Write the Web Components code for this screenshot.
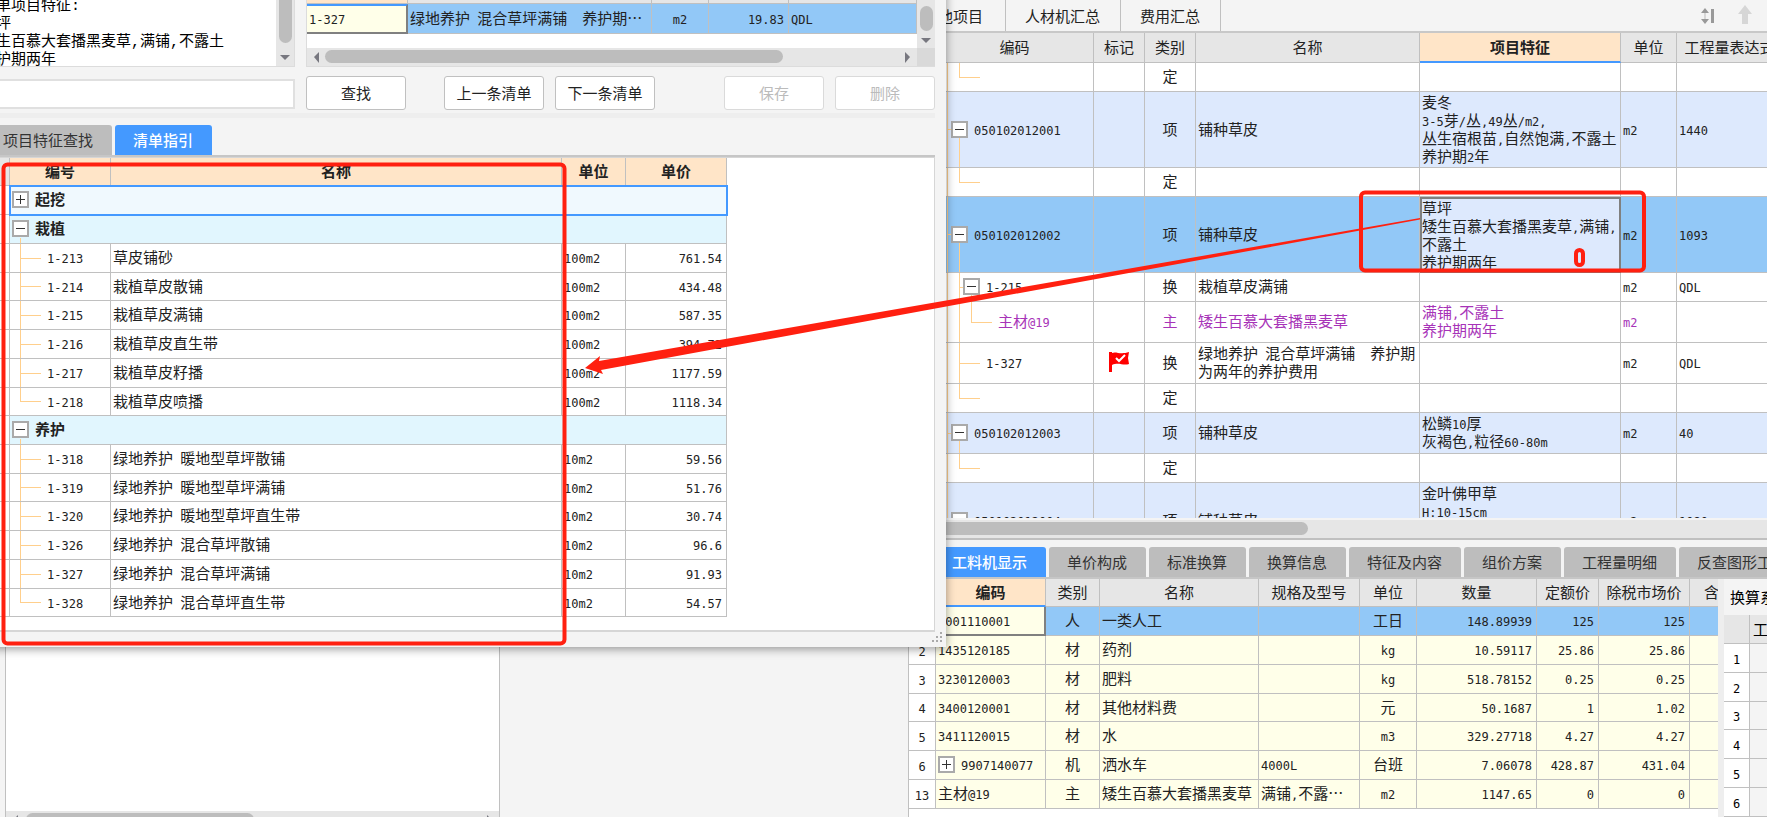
<!DOCTYPE html>
<html lang="zh-CN">
<head>
<meta charset="utf-8">
<title>清单指引</title>
<style>
html, body { height: 100%; margin: 0; overflow: hidden; }
body {
  font: 15px/18px "Noto Sans CJK SC", sans-serif; color: #222; background: #f4f4f4;
  --line: #c0c0c0; --blue: #4499ff; --head: #e6e6e6; --peach: #ffe5c8; --sel: #92c8f7;
  --item: #dde9fd; --cream: #ffffe9; --tree: #ffcf8c; --purple: #a733b8; --mark: #ff2010;
}
</style>
</head>
<body>
<cost-app></cost-app>

<template id="app-tpl">
<style>
:host { display: flex; height: 100vh; position: relative; overflow: hidden; }
.side { flex: 0 0 495px; box-sizing: border-box; display: flex; flex-direction: column; margin-left: 5px;
  border: 1px solid var(--line); border-width: 0 1px; background: #fff; }
.side scroll-bar { margin-top: auto; height: 6px; overflow: hidden; align-items: flex-start; }
.gutter { flex: 0 0 409px; box-sizing: border-box; border-right: 1px solid var(--line); }
main { flex: 1; min-width: 0; display: flex; flex-direction: column; }
.upper { flex: 1; min-height: 0; display: flex; flex-direction: column; border-bottom: 2px solid var(--line); box-sizing: border-box; }
.bar { display: flex; justify-content: space-between; height: 31px; flex: none; border-bottom: 2px solid #c8c8c8; }
.bar nav { display: flex; }
.bar a { color: inherit; text-decoration: none; padding: 7px 20px 4px 19px; height: 20px; border-right: 1px solid var(--line); }
.bar a:first-child { padding: 7px 22px 4px 14px; }
.tools { display: flex; align-items: flex-start; padding-top: 3px; gap: 20px; width: 66px; flex: none; overflow: hidden; }
.tools button { all: unset; flex: none; display: block; height: 24px; }
.clip { flex: 1; min-height: 0; overflow: hidden; background: #fff; }
.upper scroll-bar { margin-top: 2px; }
.lower { flex: 0 0 277px; display: flex; flex-direction: column; }
tab-strip { padding: 7px 0 0 25px; }
.split { flex: 1; min-height: 0; display: flex; background: #fff; }
.split .clip { min-width: 0; }
aside { flex: 0 0 43px; border-left: 6px solid #eee; background: #f4f4f4; overflow: hidden; color: #000; white-space: nowrap; }
aside h2 { font: inherit; margin: 0; padding: 9px 0 9px 6px; }
</style>
<div class="side"><scroll-bar thumb="228" lead="2"></scroll-bar></div>
<div class="gutter"></div>
<main>
  <section class="upper">
    <div class="bar">
      <nav><a href="#">其他项目</a><a href="#">人材机汇总</a><a href="#">费用汇总</a></nav>
      <div class="tools">
        <button aria-label="行高"><svg width="17" height="24"><path d="M0 10l4-5 4 5zM0 16l4 5 4-5z" fill="#999"/><path d="M4 10v6" stroke="#bbb"/><path d="M10 6h3v14h-3z" fill="#999"/></svg></button>
        <button aria-label="上移"><svg width="14" height="24"><path d="M0 11L7 2l7 9h-4v10H4V11z" fill="#d6d6d6"/></svg></button>
        <button aria-label="下移"><svg width="14" height="24"><path d="M0 12l7 9 7-9h-4V2H4v10z" fill="#d6d6d6"/></svg></button>
      </div>
    </div>
    <div class="clip"><data-grid id="bill"></data-grid></div>
    <scroll-bar thumb="399" lead="0" bare></scroll-bar>
  </section>
  <section class="lower">
    <tab-strip active="0"><span>工料机显示</span><span>单价构成</span><span>标准换算</span><span>换算信息</span><span>特征及内容</span><span>组价方案</span><span>工程量明细</span><span>反查图形工程量</span></tab-strip>
    <div class="split">
      <div class="clip"><data-grid id="res"></data-grid></div>
      <aside><h2>换算系数</h2><data-grid id="coef"></data-grid></aside>
    </div>
  </section>
</main>
<guide-dialog></guide-dialog>
<mark-layer></mark-layer>
</template>

<template id="dialog-tpl">
<style>
:host { position: absolute; left: -24px; top: -24px; width: 970px; height: 671px; box-sizing: border-box;
  padding: 0 11px 0 9px; background: #f4f4f4; box-shadow: 0 2px 9px #0006; display: flex; flex-direction: column; }
.top { display: flex; gap: 11px; height: 91px; }
.note { flex: 0 0 310px; display: flex; border: 1px solid #dcdcdc; border-width: 0 1px 1px 0; box-sizing: border-box; background: #fff; overflow: hidden; }
textarea { flex: 1; min-width: 0; border: 0; padding: 22px 0 0; margin: 0 0 0 -4px; resize: none; overflow: hidden; outline: 0; background: #fff;
  font: 15px/18px "Liberation Mono", "Noto Sans CJK SC", monospace; color: #000; white-space: pre; }
.pick { flex: 1; min-width: 0; display: grid; grid-template-columns: 1fr 18px; grid-template-rows: 72px 18px; border: 1px solid #dcdcdc; border-width: 0 0 1px 1px; background: #fff; }
.pick .view { overflow: hidden; }
.corner { background: #d9d9d9; }
.find { display: flex; align-items: flex-start; padding: 9px 0 3px; }
.find input { width: 310px; height: 30px; margin: 3px 11px 0 0; box-sizing: border-box; border: 2px solid #e0e0e0; border-left: 0; background: #fff; font: inherit; }
button { width: 100px; height: 34px; box-sizing: border-box; font: inherit; color: #222; background: #fff; border: 1px solid var(--line); border-radius: 3px; padding: 0; }
button:disabled { color: #bbb; border-color: #dadada; }
.g1 { margin-left: 38px; } .g2 { margin-left: 11px; } .g3 { margin-left: auto; }
.band { height: 5px; background: #eee; margin-bottom: 7px; }
.list { flex: 1; min-height: 0; background: #fff; border: 1px solid #d6d6d6; border-width: 1px 1px 2px 0; margin-bottom: 15px; }
.list data-grid { width: 742px; }
svg { position: absolute; right: 3px; bottom: 4px; }
</style>
<div class="top">
  <div class="note"><textarea aria-label="清单项目特征" readonly>清单项目特征:
草坪
矮生百慕大套播黑麦草,满铺,不露土
养护期两年</textarea><scroll-bar vertical thumb="50" lead="17"></scroll-bar></div>
  <div class="pick">
    <div class="view"><data-grid id="cur"></data-grid></div>
    <scroll-bar vertical thumb="25" lead="30"></scroll-bar>
    <scroll-bar thumb="458" lead="0"></scroll-bar>
    <div class="corner"></div>
  </div>
</div>
<div class="find"><input type="text" aria-label="查找内容"><button>查找</button><button class="g1">上一条清单</button><button class="g2">下一条清单</button><button class="g3" disabled>保存</button><button class="g2" disabled>删除</button></div>
<div class="band"></div>
<tab-strip active="1"><span>项目特征查找</span><span>清单指引</span></tab-strip>
<div class="list"><data-grid id="guide"></data-grid></div>
<svg width="11" height="11" fill="#aaa"><path d="M8 0h2v2H8zM4 4h2v2H4zM8 4h2v2H8zM0 8h2v2H0zM4 8h2v2H4zM8 8h2v2H8z"/></svg>
</template>

<template id="grid-tpl">
<style>
:host { display: block; }
table { table-layout: fixed; border-collapse: separate; border-spacing: 0; width: 100%; }
th, td { box-sizing: border-box; border: 0 solid var(--line); border-width: 0 1px 1px 0; padding: 0 4px 2px 2px; white-space: nowrap;
  overflow: hidden; text-align: left; font-weight: 400; }
th { background: var(--head); text-align: center; padding: 0 0 1px; }
th.hot { background: var(--peach); font-weight: 700; }
th.under { border-bottom: 2px solid var(--blue); }
th.num { background: #fff; }
.n { font: 12px/1px "DejaVu Sans Mono", monospace; }
.c { text-align: center; padding: 0 0 2px; }
.r { text-align: right; }
.item td { background-color: var(--item); }
.sel td { background-color: var(--sel); }
.cream td { background-color: var(--cream); }
.buy td { color: var(--purple); }
.grp td { background-color: #e1f6fe; font-weight: 700; }
.focus td { background-color: #f0f9fe; outline: 2px solid var(--blue); outline-offset: -1px; font-weight: 700; }
tr td.edit { background-color: var(--item); border: 2px solid #808080; padding: 0; }
tr td.code { background-color: var(--cream); border: 2px solid #808080; border-width: 0 2px 2px 0; }
tr td.top { border-top: 2px solid var(--blue); }
.box { display: inline-block; vertical-align: top; width: 17px; height: 17px; box-sizing: border-box; border: 2px solid #aaa; margin: 1px 6px 0 0;
  background: linear-gradient(#333, #333) center/9px 1px no-repeat, #fff; }
.plus { background: linear-gradient(#333, #333) center/9px 1px no-repeat, linear-gradient(#333, #333) center/1px 9px no-repeat, #fff; }
.tree { --t: linear-gradient(var(--tree), var(--tree)); background-repeat: no-repeat; }
/* guide tree: one trunk, leaves hang from it */
.leaf { padding-left: 37px; background-image: var(--t), var(--t); background-position: 10px 0, 10px 50%; background-size: 1px 100%, 21px 1px; }
.last { padding-left: 37px; background-image: var(--t), var(--t); background-position: 10px 0, 10px 50%; background-size: 1px 50%, 21px 1px; }
.open { background-image: var(--t); background-position: 10px 100%; background-size: 1px 5px; }
/* bill tree: outer trunk, item trunk, sub-item trunk */
.b0 { padding-left: 15px; background-image: var(--t), var(--t), var(--t); background-position: 11px 0, 11px 50%, 23px 100%; background-size: 1px 100%, 4px 1px, 1px 50%; }
.bEnd { background-image: var(--t), var(--t), var(--t); background-position: 11px 0, 23px 0, 23px 50%; background-size: 1px 100%, 1px 50%, 21px 1px; }
.b1 { padding-left: 27px; background-image: var(--t), var(--t), var(--t), var(--t); background-position: 11px 0, 23px 0, 23px 50%, 35px 100%; background-size: 1px 100%, 1px 100%, 6px 1px, 1px 50%; }
.b2 { padding-left: 62px; background-image: var(--t), var(--t), var(--t), var(--t); background-position: 11px 0, 23px 0, 35px 0, 35px 50%; background-size: 1px 100%, 1px 100%, 1px 50%, 21px 1px; }
.b3 { padding-left: 50px; background-image: var(--t), var(--t), var(--t); background-position: 11px 0, 23px 0, 23px 50%; background-size: 1px 100%, 1px 100%, 21px 1px; }
svg { display: block; margin: 0 auto; }
</style>
<table><colgroup></colgroup><thead></thead><tbody></tbody></table>
</template>

<script>
const tpl = id => document.getElementById(id).content.cloneNode(true);
const latin = s => s.replace(/[\x20-\x7e]+/g, m => `<span class="n">${m}</span>`);

class ScrollBar extends HTMLElement {
  connectedCallback() {
    const v = this.hasAttribute('vertical'), bare = this.hasAttribute('bare');
    const lead = this.getAttribute('lead'), len = this.getAttribute('thumb');
    const arrow = d => bare ? '' : `<svg width="18" height="18"><path d="${d}" fill="#77777f"/></svg>`;
    this.attachShadow({ mode: 'open' }).innerHTML = `<style>
      :host { display: flex; flex: none; background: #e6e6e6; ${v ? 'width: 18px; flex-direction: column' : 'height: 18px'}; }
      i { flex: none; background: #bdbdbd; border-radius: 7px; ${v ? `width: 13px; height: ${len}px; margin: ${lead}px 3px 0` : `height: 13px; width: ${len}px; margin: 2px 0 0 ${lead}px`}; }
      svg { flex: none; display: block; }
      svg:last-child { margin-${v ? 'top' : 'left'}: auto; }
    </style>${v ? '' : arrow('M12 4v11L7 9z')}<i></i>${arrow(v ? 'M4 7h10l-5 5z' : 'M6 4v11l5-6z')}`;
  }
}

class TabStrip extends HTMLElement {
  connectedCallback() {
    const on = +this.getAttribute('active');
    const tabs = [...this.children].map((el, i) => { el.slot = 't' + i; return `<button role="tab" aria-selected="${i === on}"><slot name="t${i}"></slot></button>`; }).join('');
    this.attachShadow({ mode: 'open' }).innerHTML = `<style>
      :host { display: flex; flex: none; gap: 3px; overflow: hidden; border-bottom: 2px solid #c6c6c6; }
      button { flex: none; height: 30px; border: 0; border-radius: 3px 3px 0 0; padding: 0 19px 0 18px; background: #bdbdbd; color: #333; font: inherit; white-space: nowrap; }
      button[aria-selected=true] { background: var(--blue); color: #fff; font-weight: 500; }
    </style>${tabs}`;
  }
}

class DataGrid extends HTMLElement {
  connectedCallback() {
    const d = DATA[this.id], root = this.attachShadow({ mode: 'open' });
    root.append(tpl('grid-tpl'));
    const cell = (tag, c, i) => {
      const [text, cls, span] = Array.isArray(c) ? c : [c, d.align?.[i] || ''];
      const [, box = '', rest] = text.match(/^(<i class="box.*?<\/i>)?(.*)$/s);
      const body = rest[0] === '<' ? rest : rest.split('\n').map(latin).join('<br>');
      return `<${tag} class="${cls}"${span ? ` colspan="${span}"` : ''}>${box}${body}</${tag}>`;
    };
    root.querySelector('colgroup').innerHTML = d.cols.map(w => `<col${w ? ` style="width:${w}px"` : ''}>`).join('');
    root.querySelector('thead').innerHTML = `<tr style="height:${d.headHeight}px">${d.head.map(h => cell('th', Array.isArray(h) ? h : [h, ''], 0)).join('')}</tr>`;
    root.querySelector('tbody').innerHTML = d.rows.map(([cls, h, cells]) =>
      `<tr class="${cls}" style="height:${h}px">${cells.map((c, i) => cell(c[1] === 'num' ? 'th' : 'td', c, i)).join('')}</tr>`).join('');
    if (d.width) root.querySelector('table').style.width = d.width;
  }
}

const minus = '<i class="box"></i>', plus = '<i class="box plus"></i>', num = ['', 'num'];
const flag = '<svg width="20" height="21" role="img" aria-label="标记"><path d="M0 0h3v20H0z" fill="#f00"/><path d="M3 1c4-2 8 2 17-1l-1 6 1 6c-6 2-10-2-17 1z" fill="#f00"/><path d="M7 6l3 3 6-6" fill="none" stroke="#fff" stroke-width="2"/></svg>';
const end = ['', 29, [num, ['', 'tree bEnd'], '', '定', '', '', '', '']];
const leaves = (rows, unit) => rows.map(([code, name, price], i) =>
  ['', i % 4 === 1 ? 28 : 29, [num, [code, 'tree ' + (i === rows.length - 1 ? 'last' : 'leaf')], name, unit, price]]);

const DATA = {
  bill: {
    width: 'calc(100% + 16px)', cols: [27, 158, 51, 51, 0, 201, 56, 106], headHeight: 30, align: ['', '', 'c', 'c'],
    head: ['', '编码', '标记', '类别', '名称', ['项目特征', 'hot under'], '单位', '工程量表达式'],
    rows: [
      end,
      ['item', 76, [num, [minus + '050102012001', 'tree b0'], '', '项', '铺种草皮', '麦冬\n3-5芽/丛,49丛/m2,\n丛生宿根苗,自然饱满,不露土\n养护期2年', 'm2', '1440']],
      end,
      ['sel', 76, [num, [minus + '050102012002', 'tree b0'], '', '项', '铺种草皮', ['草坪\n矮生百慕大套播黑麦草,满铺,\n不露土\n养护期两年', 'edit'], 'm2', '1093']],
      ['', 29, [num, [minus + '1-215', 'tree b1'], '', '换', '栽植草皮满铺', '', 'm2', 'QDL']],
      ['buy', 41, [num, ['主材@19', 'tree b2'], '', '主', '矮生百慕大套播黑麦草', '满铺,不露土\n养护期两年', 'm2', '']],
      ['', 41, [num, ['1-327', 'tree b3'], flag, '换', '绿地养护 混合草坪满铺　养护期\n为两年的养护费用', '', 'm2', 'QDL']],
      end,
      ['item', 41, [num, [minus + '050102012003', 'tree b0'], '', '项', '铺种草皮', '松鳞10厚\n灰褐色,粒径60-80m', 'm2', '40']],
      end,
      ['item', 76, [num, [minus + '050102012004', 'tree b0'], '', '项', '铺种草皮', '金叶佛甲草\nH:10-15cm\n\u00a0\n\u00a0', 'm2', '1090']],
    ],
  },
  res: {
    width: 'calc(100% + 31px)', cols: [27, 110, 54, 0, 101, 57, 120, 62, 91, 59], headHeight: 28,
    align: ['c', '', 'c', '', '', 'c', 'r', 'r', 'r', ''],
    head: ['', ['编码', 'hot under'], '类别', '名称', '规格及型号', '单位', '数量', '定额价', '除税市场价', '含税'],
    rows: [
      ['sel', 29, [['1', 'num'], ['0001110001', 'code'], '人', '一类人工', '', '工日', '148.89939', '125', '125', '']],
      ['cream', 29, [['2', 'num'], '1435120185', '材', '药剂', '', 'kg', '10.59117', '25.86', '25.86', '']],
      ['cream', 29, [['3', 'num'], '3230120003', '材', '肥料', '', 'kg', '518.78152', '0.25', '0.25', '']],
      ['cream', 28, [['4', 'num'], '3400120001', '材', '其他材料费', '', '元', '50.1687', '1', '1.02', '']],
      ['cream', 29, [['5', 'num'], '3411120015', '材', '水', '', 'm3', '329.27718', '4.27', '4.27', '']],
      ['cream', 29, [['6', 'num'], plus + '9907140077', '机', '洒水车', '4000L', '台班', '7.06078', '428.87', '431.04', '']],
      ['cream', 29, [['13', 'num'], '主材@19', '主', '矮生百慕大套播黑麦草', '满铺,不露…', 'm2', '1147.65', '0', '0', '']],
    ],
  },
  coef: {
    width: '108px', cols: [26, 82], headHeight: 29, head: ['', '工料机类别'],
    rows: ['1', '2', '3', '4', '5', '6'].map((n, i) => ['', i % 4 === 2 ? 28 : 29, [[n, 'num'], '']]),
  },
  cur: {
    cols: [101, 244, 57, 80, 0], headHeight: 28, align: ['', '', 'c', 'r', ''],
    head: [['', 'hot'], '', '', '', ''],
    rows: [['sel', 30, [['1-327', 'code top'], '绿地养护 混合草坪满铺　养护期…', 'm2', '19.83', 'QDL']]],
  },
  guide: {
    cols: [25, 101, 451, 64, 101], headHeight: 28, align: ['', '', '', '', 'r'],
    head: ['', ['编号', 'hot'], ['名称', 'hot'], ['单位', 'hot'], ['单价', 'hot']],
    rows: [
      ['focus', 29, [num, [plus + '起挖', '', 4]]],
      ['grp', 29, [num, [minus + '栽植', 'tree open', 4]]],
      ...leaves([['1-213', '草皮铺砂', '761.54'], ['1-214', '栽植草皮散铺', '434.48'], ['1-215', '栽植草皮满铺', '587.35'],
        ['1-216', '栽植草皮直生带', '394.72'], ['1-217', '栽植草皮籽播', '1177.59'], ['1-218', '栽植草皮喷播', '1118.34']], '100m2'),
      ['grp', 29, [num, [minus + '养护', 'tree open', 4]]],
      ...leaves([['1-318', '绿地养护 暖地型草坪散铺', '59.56'], ['1-319', '绿地养护 暖地型草坪满铺', '51.76'], ['1-320', '绿地养护 暖地型草坪直生带', '30.74'],
        ['1-326', '绿地养护 混合草坪散铺', '96.6'], ['1-327', '绿地养护 混合草坪满铺', '91.93'], ['1-328', '绿地养护 混合草坪直生带', '54.57']], '10m2'),
    ],
  },
};

class MarkLayer extends HTMLElement {
  connectedCallback() {
    this.attachShadow({ mode: 'open' }).innerHTML = `<style>
      :host { position: absolute; inset: 0; pointer-events: none; }
      svg { display: block; width: 100%; height: 100%; }
    </style><svg><g fill="none" stroke="var(--mark)" stroke-width="4">
      <rect x="3.5" y="164.5" width="561" height="479" rx="4"/>
      <rect x="1361" y="192.5" width="283" height="78" rx="4"/>
      <rect x="1576" y="250" width="7" height="15" rx="3.5"/></g>
      <path d="M585 368L600 356L599 361L1420 218V219.5L601 370L603 374Z" fill="var(--mark)"/></svg>`;
  }
}

const fromTemplate = id => class extends HTMLElement {
  connectedCallback() { this.attachShadow({ mode: 'open' }).append(tpl(id)); }
};

customElements.define('scroll-bar', ScrollBar);
customElements.define('tab-strip', TabStrip);
customElements.define('data-grid', DataGrid);
customElements.define('mark-layer', MarkLayer);
customElements.define('guide-dialog', fromTemplate('dialog-tpl'));
customElements.define('cost-app', fromTemplate('app-tpl'));
</script>
</body>
</html>
